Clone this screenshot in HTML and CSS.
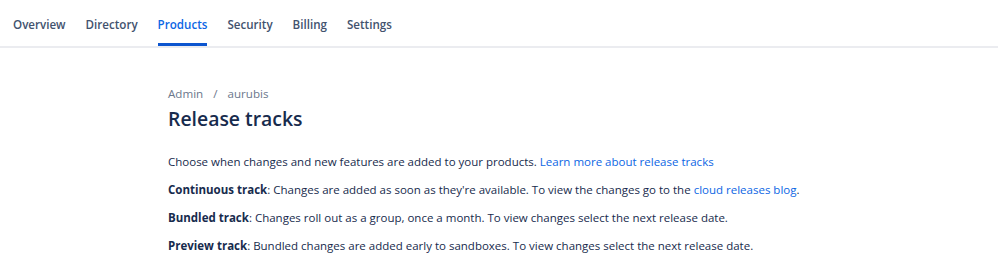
FILE: index.html
```html
<!DOCTYPE html>
<html lang="en">
<head>
  <meta charset="UTF-8">
  <meta name="viewport" content="width=device-width, initial-scale=1.0">
  <title>Release tracks</title>
  <link rel="stylesheet" href="styles.css">
</head>
<body>
  <nav class="tabs">
    <a href="#" class="tab">Overview</a>
    <a href="#" class="tab">Directory</a>
    <a href="#" class="tab active">Products</a>
    <a href="#" class="tab">Security</a>
    <a href="#" class="tab">Billing</a>
    <a href="#" class="tab">Settings</a>
  </nav>

  <main class="content">
    <div class="breadcrumbs">
      <a href="#">Admin</a>
      <span class="sep">/</span>
      <a href="#">aurubis</a>
    </div>
    <h1>Release tracks</h1>

    <p>Choose when changes and new features are added to your products. <a href="#" class="link">Learn more about release tracks</a></p>
    <p><strong>Continuous track</strong>: Changes are added as soon as they're available. To view the changes go to the <a href="#" class="link">cloud releases blog</a>.</p>
    <p><strong>Bundled track</strong>: Changes roll out as a group, once a month. To view changes select the next release date.</p>
    <p><strong>Preview track</strong>: Bundled changes are added early to sandboxes. To view changes select the next release date.</p>
  </main>
</body>
</html>
```

FILE: styles.css
```css
body {
  font-family: "Open Sans", "Noto Sans", sans-serif;
  color: #172b4d;
  margin: 0;
  background: #fff;
}
.tabs {
  display: flex;
  gap: 20px;
  height: 46px;
  padding: 0 13px;
  border-bottom: 2px solid #ebecf0;
}
.tab {
  display: flex;
  align-items: center;
  height: 100%;
  box-sizing: border-box;
  padding-top: 5px;
  border-bottom: 3px solid transparent;
  margin-bottom: -2px;
  font-size: 11.6px;
  font-weight: 600;
  color: #42526e;
  text-decoration: none;
}
.tab.active {
  color: #0c66e4;
  border-bottom-color: #0c55cf;
}
.content {
  max-width: 662px;
  margin: 0 auto;
  padding-top: 36px;
}
.breadcrumbs {
  font-size: 11.6px;
  line-height: 20px;
  color: #6b778c;
}
.breadcrumbs a {
  color: #6b778c;
  text-decoration: none;
}
.breadcrumbs .sep {
  margin: 0 7px;
}
h1 {
  margin: 1px 0 0;
  font-size: 19.4px;
  line-height: 28px;
  font-weight: 600;
  color: #172b4d;
}
p {
  margin: 8px 0 0;
  font-size: 11.5px;
  line-height: 20px;
  color: #172b4d;
}
h1 + p {
  margin-top: 19px;
}
strong {
  font-weight: 700;
}
.link {
  color: #0c66e4;
  text-decoration: none;
}
```
